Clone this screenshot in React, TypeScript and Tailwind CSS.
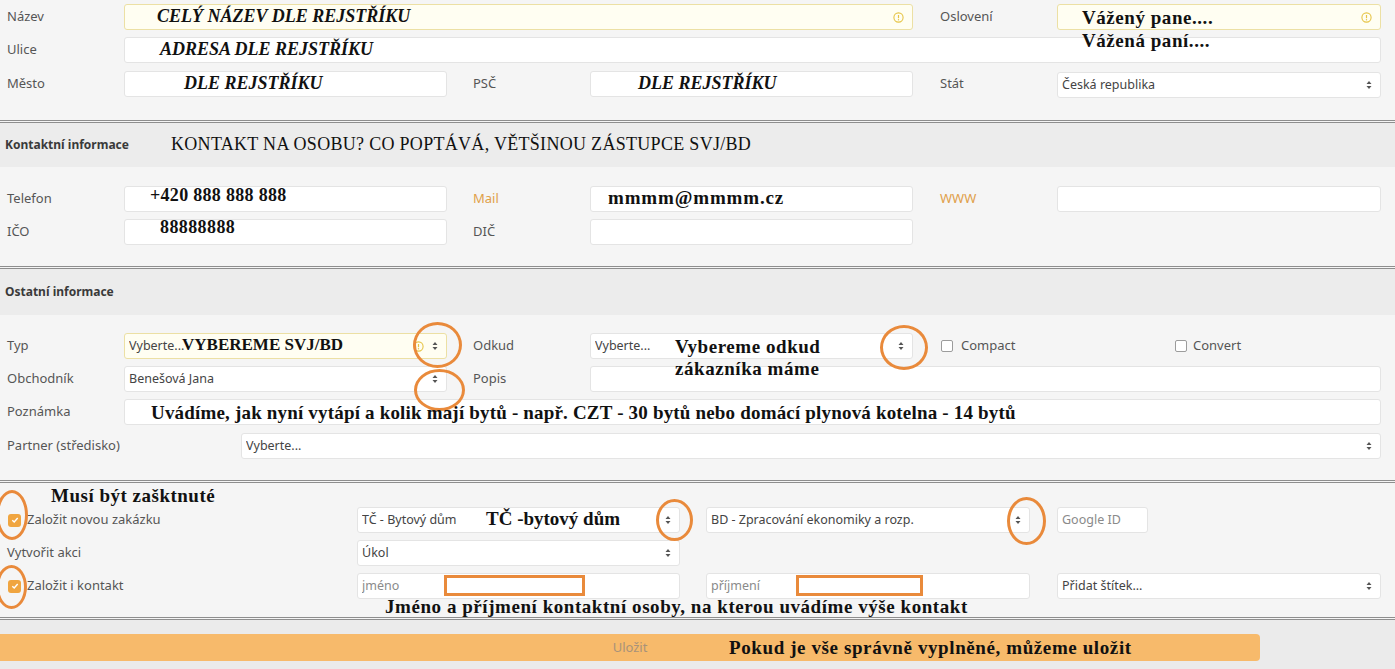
import type { ReactNode } from "react";

const caret = (
  <svg width="6" height="10" viewBox="0 0 6 10" className="shrink-0">
    <path d="M0.5 4 L3 1 L5.5 4 Z M0.5 6 L3 9 L5.5 6 Z" fill="#555" />
  </svg>
);

const warnIcon = (
  <svg width="11" height="11" viewBox="0 0 11 11" className="shrink-0">
    <circle cx="5.5" cy="5.5" r="4.6" fill="none" stroke="#e6c446" strokeWidth="1.1" />
    <path d="M5.5 3 V6.2" stroke="#e6c446" strokeWidth="1.2" />
    <circle cx="5.5" cy="7.8" r="0.7" fill="#e6c446" />
  </svg>
);

interface IFieldProps {
  w: string;
  warn?: boolean;
  select?: boolean;
  placeholder?: string;
  value?: string;
  className?: string;
}

const Field = ({ w, warn, select, placeholder, value, className }: IFieldProps) => {
  return (
    <div
      className={`${w} h-[26px] shrink-0 flex items-center gap-[8px] px-[4px] pr-[8px] rounded-[3px] border ${
        warn ? "bg-[#fffef2] border-[#ece0a4]" : "bg-white border-[#e4e4e4]"
      } ${className || ""}`}
    >
      <span className={`flex-1 text-[12.5px] truncate ${placeholder ? "text-[#8a8a8a]" : "text-[#444]"}`}>
        {value || placeholder}
      </span>
      {warn && warnIcon}
      {select && caret}
    </div>
  );
};

const Label = ({ w, children, className }: { w: string; children: ReactNode; className?: string }) => (
  <div className={`${w} shrink-0 text-[13px] text-[#555] ${className || ""}`}>{children}</div>
);

const Check = ({ checked }: { checked?: boolean }) =>
  checked ? (
    <span className="w-[13px] h-[13px] rounded-[3px] bg-[#f0a540] flex items-center justify-center shrink-0">
      <svg width="8" height="8" viewBox="0 0 8 8">
        <path d="M1.3 4.2 L3.2 6 L6.7 2" fill="none" stroke="#fff" strokeWidth="1.4" />
      </svg>
    </span>
  ) : (
    <span className="w-[12px] h-[12px] rounded-[2px] bg-white border border-[#9c9c9c] shrink-0" />
  );

const Separator = () => <div className="h-[3px] border-t-[3px] border-double border-[#8e8e8e]" />;

const SectionHeader = ({ title, h }: { title: string; h: string }) => (
  <div className={`${h} bg-[#ececec] flex items-center px-[5px] text-[12px] font-bold text-[#3a3a3a]`}>
    {title}
  </div>
);

interface INote {
  x: number;
  y: number;
  text: string;
  cls: string;
}

const caps = "text-[18px] font-bold italic";
const bold = "text-[19px] font-bold tracking-[0.55px]";

// annotation texts drawn over the screenshot (y = vertical center)
const notes: INote[] = [
  { x: 157, y: 16, text: "CELÝ NÁZEV DLE REJSTŘÍKU", cls: caps },
  { x: 160, y: 49, text: "ADRESA DLE REJSTŘÍKU", cls: caps },
  { x: 184, y: 83, text: "DLE REJSTŘÍKU", cls: caps },
  { x: 638, y: 83, text: "DLE REJSTŘÍKU", cls: caps },
  { x: 1082, y: 17, text: "Vážený pane....", cls: bold },
  { x: 1082, y: 40, text: "Vážená paní....", cls: bold },
  {
    x: 171,
    y: 144,
    text: "KONTAKT NA OSOBU? CO POPTÁVÁ, VĚTŠINOU ZÁSTUPCE SVJ/BD",
    cls: "text-[18px] font-normal tracking-[0.3px]",
  },
  { x: 150, y: 195, text: "+420 888 888 888", cls: "text-[18px] font-bold tracking-[0.3px]" },
  { x: 160, y: 227, text: "88888888", cls: "text-[18px] font-bold tracking-[0.4px]" },
  { x: 608, y: 197, text: "mmmm@mmmm.cz", cls: "text-[19px] font-bold tracking-[0.85px]" },
  { x: 182, y: 345, text: "VYBEREME SVJ/BD", cls: "text-[17px] font-bold" },
  { x: 675, y: 346, text: "Vybereme odkud", cls: bold },
  { x: 675, y: 368, text: "zákazníka máme", cls: bold },
  {
    x: 151,
    y: 412,
    text: "Uvádíme, jak nyní vytápí a kolik mají bytů - např. CZT - 30 bytů nebo domácí plynová kotelna - 14 bytů",
    cls: "text-[19px] font-bold tracking-[0.18px]",
  },
  { x: 51, y: 495, text: "Musí být zašktnuté", cls: "text-[19px] font-bold tracking-[0.5px]" },
  { x: 486, y: 518, text: "TČ -bytový dům", cls: "text-[19px] font-bold" },
  {
    x: 385,
    y: 606,
    text: "Jméno a příjmení kontaktní osoby, na kterou uvádíme výše kontakt",
    cls: bold,
  },
  { x: 729, y: 647, text: "Pokud je vše správně vyplněné, můžeme uložit", cls: "text-[19px] font-bold tracking-[0.6px]" },
];

const rings = [
  { x: 413, y: 322, w: 49, h: 46 },
  { x: 414, y: 369, w: 51, h: 42 },
  { x: 880, y: 325, w: 48, h: 45 },
  { x: 656, y: 499, w: 37, h: 42 },
  { x: 1007, y: 497, w: 39, h: 48 },
  { x: -4, y: 490, w: 32, h: 50 },
  { x: -4, y: 565, w: 31, h: 44 },
];

const boxes = [
  { x: 444, y: 575, w: 141, h: 21 },
  { x: 796, y: 575, w: 127, h: 21 },
];

export default function App() {
  return (
    <div className="relative w-[1395px] h-[669px] overflow-hidden bg-[#f5f5f5] font-['Noto_Sans',sans-serif]">
      {/* Adresa */}
      <div className="px-[7px] pt-[4px] pb-[22px] flex flex-col gap-[7px]">
        <div className="flex items-center">
          <Label w="w-[117px]">Název</Label>
          <Field w="w-[789px]" warn />
          <Label w="w-[117px]" className="ml-[27px]">Oslovení</Label>
          <Field w="w-[324px]" warn />
        </div>
        <div className="flex items-center">
          <Label w="w-[117px]">Ulice</Label>
          <Field w="w-[1257px]" />
        </div>
        <div className="flex items-center">
          <Label w="w-[117px]">Město</Label>
          <Field w="w-[323px]" />
          <Label w="w-[117px]" className="ml-[26px]">PSČ</Label>
          <Field w="w-[323px]" />
          <Label w="w-[117px]" className="ml-[27px]">Stát</Label>
          <Field w="w-[324px]" select value="Česká republika" className="mt-[2px]" />
        </div>
      </div>
      <Separator />

      <SectionHeader title="Kontaktní informace" h="h-[44px]" />
      <div className="px-[7px] pt-[19px] pb-[21px] flex flex-col gap-[7px]">
        <div className="flex items-center">
          <Label w="w-[117px]">Telefon</Label>
          <Field w="w-[323px]" />
          <Label w="w-[117px]" className="ml-[26px] text-[#e0a04a]">Mail</Label>
          <Field w="w-[323px]" />
          <Label w="w-[117px]" className="ml-[27px] text-[#e0a04a]">WWW</Label>
          <Field w="w-[324px]" />
        </div>
        <div className="flex items-center">
          <Label w="w-[117px]">IČO</Label>
          <Field w="w-[323px]" />
          <Label w="w-[117px]" className="ml-[26px]">DIČ</Label>
          <Field w="w-[323px]" />
        </div>
      </div>
      <Separator />

      <SectionHeader title="Ostatní informace" h="h-[46px]" />
      <div className="px-[7px] pt-[18px] pb-[21px] flex flex-col gap-[7px]">
        <div className="flex items-center">
          <Label w="w-[117px]">Typ</Label>
          <Field w="w-[323px]" warn select value="Vyberte..." />
          <Label w="w-[117px]" className="ml-[26px]">Odkud</Label>
          <Field w="w-[323px]" select value="Vyberte..." />
          <div className="ml-[28px] w-[234px] flex items-center gap-[8px] text-[13px] text-[#555]">
            <Check />
            Compact
          </div>
          <div className="flex items-center gap-[6px] text-[13px] text-[#555]">
            <Check />
            Convert
          </div>
        </div>
        <div className="flex items-center">
          <Label w="w-[117px]">Obchodník</Label>
          <Field w="w-[323px]" select value="Benešová Jana" />
          <Label w="w-[117px]" className="ml-[26px]">Popis</Label>
          <Field w="w-[791px]" />
        </div>
        <div className="flex items-center">
          <Label w="w-[117px]">Poznámka</Label>
          <Field w="w-[1257px]" />
        </div>
        <div className="flex items-center mt-[1px]">
          <Label w="w-[234px]">Partner (středisko)</Label>
          <Field w="w-[1140px]" select value="Vyberte..." />
        </div>
      </div>
      <Separator />

      {/* Zakázka */}
      <div className="px-[7px] pt-[24px] pb-[18px] flex flex-col gap-[7px]">
        <div className="flex items-center">
          <div className="w-[350px] flex items-center gap-[6px] text-[13px] text-[#555]">
            <span className="ml-[1px]">
              <Check checked />
            </span>
            Založit novou zakázku
          </div>
          <Field w="w-[323px]" select value="TČ - Bytový dům" />
          <Field w="w-[324px]" select value="BD - Zpracování ekonomiky a rozp." className="ml-[26px]" />
          <Field w="w-[91px]" placeholder="Google ID" className="ml-[27px]" />
        </div>
        <div className="flex items-center">
          <Label w="w-[350px]">Vytvořit akci</Label>
          <Field w="w-[323px]" select value="Úkol" />
        </div>
        <div className="flex items-center">
          <div className="w-[350px] flex items-center gap-[6px] text-[13px] text-[#555]">
            <span className="ml-[1px]">
              <Check checked />
            </span>
            Založit i kontakt
          </div>
          <Field w="w-[323px]" placeholder="jméno" />
          <Field w="w-[324px]" placeholder="příjmení" className="ml-[26px]" />
          <Field w="w-[324px]" select value="Přidat štítek..." className="ml-[27px]" />
        </div>
      </div>
      <Separator />

      <div className="bg-[#ebebeb] pt-[14px] pb-[8px]">
        <div className="w-[1260px] h-[27px] rounded-r-[4px] bg-[#f7ba6b] flex items-center justify-center text-[13px] text-[#a8927a]">
          Uložit
        </div>
      </div>

      {/* annotation layer */}
      {rings.map((r, i) => (
        <div
          key={`r${i}`}
          className="absolute rounded-[50%] border-[3px] border-[#e98a3b]"
          style={{ left: r.x, top: r.y, width: r.w, height: r.h }}
        />
      ))}
      {boxes.map((b, i) => (
        <div
          key={`b${i}`}
          className="absolute bg-white border-[3px] border-[#e98a3b]"
          style={{ left: b.x, top: b.y, width: b.w, height: b.h }}
        />
      ))}
      {notes.map((n, i) => (
        <div
          key={`n${i}`}
          className={`absolute whitespace-nowrap leading-none text-[#111] font-['Liberation_Serif',serif] ${n.cls}`}
          style={{ left: n.x, top: n.y - 9 }}
        >
          {n.text}
        </div>
      ))}
    </div>
  );
}
